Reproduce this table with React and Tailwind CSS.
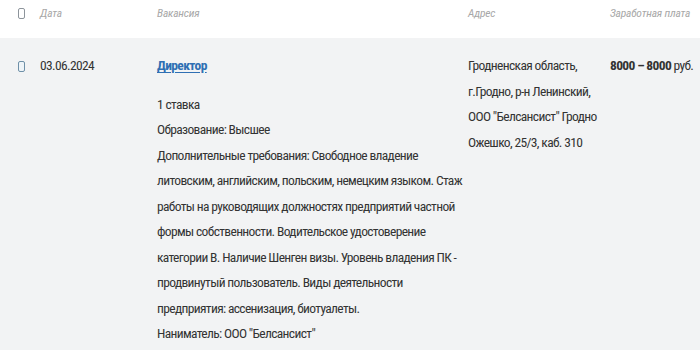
const Box = ({ className = "" }) => (
  <span className={`block w-[7px] h-[11px] rounded-[2px] border-[1.5px] ${className}`}></span>
);

const description = [
  "1 ставка",
  "Образование: Высшее",
  "Дополнительные требования: Свободное владение литовским, английским, польским, немецким языком. Стаж работы на руководящих должностях предприятий частной формы собственности. Водительское удостоверение категории B. Наличие Шенген визы. Уровень владения ПК - продвинутый пользователь. Виды деятельности предприятия: ассенизация, биотуалеты.",
  "Наниматель: ООО \"Белсансист\"",
];

export default function App() {
  return (
    <div className="w-[700px] h-[350px] overflow-hidden bg-white text-[#333] font-['Roboto_Condensed',_'Roboto',_sans-serif]">
      {/* шапка таблицы */}
      <div className="grid grid-cols-[22px_117px_311px_142px_1fr] h-[38px] pt-[5px] pl-[18px] text-[11.5px] leading-[17px] italic text-[#a8a8a8] tracking-[-0.2px]">
        <div className="pt-[3px]"><Box className="border-[#8d949b]" /></div>
        <div>Дата</div>
        <div>Вакансия</div>
        <div>Адрес</div>
        <div className="whitespace-nowrap">Заработная плата</div>
      </div>

      {/* строка вакансии */}
      <div className="grid grid-cols-[22px_117px_311px_142px_1fr] pl-[18px] pt-[15px] bg-[#f2f3f4] text-[13.5px] leading-[25.5px] tracking-[-0.65px] min-h-[312px]">
        <div className="pt-[8px]"><Box className="border-[#6f90a8] bg-[#eef4f8]" /></div>
        <div>03.06.2024</div>
        <div className="pr-[4px]">
          <a href="#" className="font-bold text-[#2f6fb3] underline underline-offset-2">Директор</a>
          <div className="mt-[13px]">
            {description.map((line, i) => (
              <p key={i}>{line}</p>
            ))}
          </div>
        </div>
        <div className="pr-[8px]">
          Гродненская область, г.Гродно, р-н Ленинский, ООО "Белсансист" Гродно Ожешко, 25/3, каб. 310
        </div>
        <div className="whitespace-nowrap">
          <span className="font-bold">8000 – 8000</span> руб.
        </div>
      </div>
    </div>
  );
}
